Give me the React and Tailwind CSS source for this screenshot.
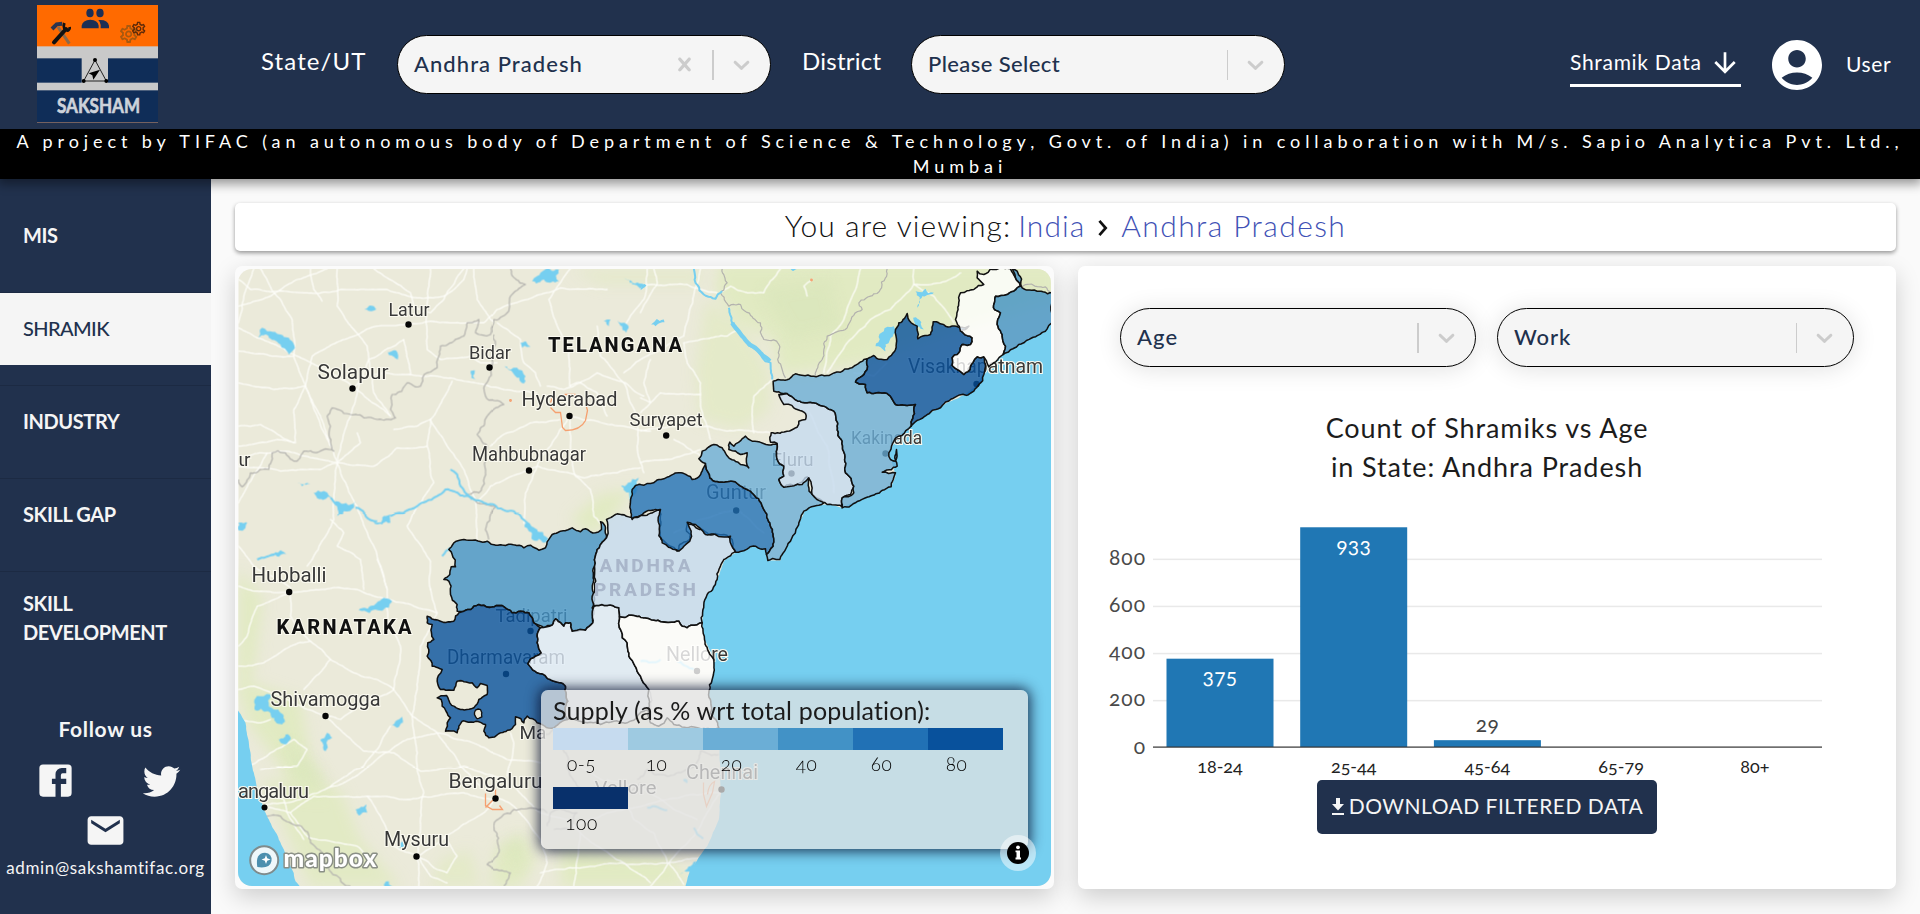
import React from "react";
import { MdAccountCircle, MdArrowDownward, MdEmail, MdPeople, MdOutlineSettings } from "react-icons/md";

/* ---------- map drawing helpers ---------- */

function noise(x, y) {
  const s = Math.sin(x * 12.9898 + y * 78.233) * 43758.5453;
  return (s - Math.floor(s)) * 2 - 1;
}

function split(a, b, amp, out) {
  const len = Math.hypot(b[0] - a[0], b[1] - a[1]);
  if (len < 11) {
    out.push(b);
    return;
  }
  const mx = (a[0] + b[0]) / 2;
  const my = (a[1] + b[1]) / 2;
  const d = Math.min(len, 60) * amp;
  const m = [mx + noise(mx, my) * d, my + noise(my, mx) * d];
  split(a, m, amp, out);
  split(m, b, amp, out);
}

function rough(text, amp = 0.12, closed = true) {
  const n = text.trim().split(/[\s,]+/).map(Number);
  const pts = [];
  for (let i = 0; i < n.length; i += 2) pts.push([n[i], n[i + 1]]);
  const out = [pts[0]];
  const last = closed ? pts.length : pts.length - 1;
  for (let i = 0; i < last; i++) split(pts[i], pts[(i + 1) % pts.length], amp, out);
  return "M" + out.map((p) => p[0].toFixed(1) + " " + p[1].toFixed(1)).join("L") + (closed ? "Z" : "");
}

/* Sections share one scale (3 units per pixel) and differ in origin. */
const NW = "translate(230 260) scale(.33333)";
const NE = "translate(640 260) scale(.33333)";
const SW = "translate(230 580) scale(.33333)";
const SE = "translate(640 580) scale(.33333)";
const MID = "translate(420 480) scale(.33333)";

const SEA =
  "2470 180 2440 215 2385 245 2320 285 2280 315 2260 335 2240 375 2205 405 2150 430 2100 460 2050 490 2000 530 1975 580 1995 650 1982 682 1900 715 1835 745 1790 735 1750 738 1725 750 1705 790 1680 845 1655 885 1650 903 1610 903 1605 870 1570 860 1510 883 1480 905 1460 960 1420 1020 1415 1090 1422 1140 1450 1200 1445 1260 1435 1300 1440 1360 1465 1405 1467 1490 1472 1600 1465 1680 1430 1760 1380 1830 1362 1890 2480 1890";
const WEST_SEA = "10 1340 24 1355 45 1390 60 1480 70 1540 85 1600 105 1660 130 1710 160 1770 180 1820 195 1865 215 1890 10 1890";

const MID_DISTRICTS = [
  ["#4292c6", "85 210 100 190 130 180 200 185 255 198 310 205 330 197 355 212 375 205 395 165 420 155 455 145 480 157 495 148 525 160 543 150 540 127 555 145 558 175 530 210 522 260 515 385 517 430 495 452 470 455 455 455 450 430 435 430 430 440 405 418 395 437 370 445 340 430 325 400 300 395 275 400 245 378 175 375 130 395 110 395 110 375 90 345 85 305 70 300 88 285 92 262 105 262 95 225"],
  ["#08519c", "20 410 60 425 100 425 115 400 130 395 175 375 245 378 275 400 300 395 325 400 340 430 360 445 350 470 350 490 362 520 345 530 322 553 350 580 400 605 435 620 440 720 400 745 350 730 320 710 310 730 285 712 285 735 240 760 205 775 190 755 195 735 160 728 125 725 115 740 110 760 75 755 80 730 90 715 65 680 62 660 50 655 78 648 88 670 120 690 160 685 175 660 200 645 200 618 180 612 170 625 155 610 110 605 100 632 60 630 50 605 65 570 35 560 20 530 22 490 40 480 35 435 20 430"],
  ["#deebf7", "360 445 395 437 405 418 430 440 435 430 450 430 455 455 495 452 517 430 520 380 560 378 595 385 597 412 600 450 620 490 625 530 660 590 685 630 690 690 620 730 580 725 540 735 440 720 435 620 400 605 350 580 322 553 345 530 362 520 350 490 350 470"],
  ["#c6dbef", "562 150 558 120 585 105 635 115 660 108 718 90 722 180 770 215 778 195 808 180 810 165 798 155 800 132 845 150 865 165 910 165 935 180 938 205 945 215 910 240 890 300 860 345 850 375 845 430 800 445 785 440 775 425 700 422 640 408 597 412 595 385 560 378 520 380 515 350 522 260 530 210 558 175"],
  ["#ffffff", "597 412 640 408 700 422 775 425 785 440 800 445 845 430 852 480 880 540 875 600 865 640 870 700 895 745 800 745 760 735 740 715 715 740 690 730 685 630 660 590 625 530 620 490 600 450"],
];

const NE_DISTRICTS = [
  ["#2171b5", "-25 780 -25 690 -15 678 30 672 70 658 115 640 155 660 185 635 195 612 208 655 250 668 290 672 330 695 365 740 388 790 398 830 398 860 378 885 375 868 345 860 285 878 270 830 195 825 165 795 140 788 152 815 148 845 115 875 65 850 60 750 0 768"],
  ["#6baed6", "175 598 185 575 220 555 245 565 265 595 300 615 325 625 320 580 300 585 265 570 268 548 280 560 315 530 335 545 410 552 410 600 430 620 430 650 415 660 430 683 470 675 500 652 515 705 550 730 520 740 490 755 475 790 450 845 425 885 418 900 382 903 378 885 398 860 398 830 388 790 365 740 330 695 290 672 250 668 208 655 195 612"],
  ["#c6dbef", "415 405 440 402 500 430 550 440 580 455 590 500 605 545 615 640 640 680 630 705 605 715 605 742 560 735 515 705 505 655 485 675 430 683 415 660 430 650 430 620 410 600 410 552 390 548 392 520 470 503 475 485 495 480 495 462 470 450 430 435"],
  ["#6baed6", "398 365 450 355 465 343 520 350 560 348 600 338 680 298 680 330 645 368 675 375 680 400 740 402 765 435 825 435 812 500 760 545 745 580 750 600 765 605 768 570 770 620 725 638 765 640 752 682 605 745 605 715 640 700 640 680 615 640 605 545 590 500 580 455 550 440 500 430 440 402 400 395"],
  ["#08519c", "680 298 700 288 740 300 765 270 765 210 775 190 800 162 812 190 830 200 832 238 870 225 878 187 915 200 970 205 985 200 960 215 995 235 990 255 965 255 955 280 935 295 935 318 970 345 990 320 1010 292 1030 292 1035 320 1030 345 1000 395 900 445 812 500 825 435 765 435 740 402 680 400 675 375 645 368 680 330"],
  ["#ffffff", "1010 35 1030 45 1050 28 1110 28 1125 55 1140 80 1120 95 1065 110 1062 150 1080 160 1070 195 1085 225 1095 260 1088 285 1045 322 1030 292 1010 292 990 320 970 345 935 318 935 295 955 280 965 255 990 255 995 235 960 215 945 180 960 100 1000 90 1030 75 1010 55"],
  ["#4292c6", "1115 28 1130 35 1145 85 1190 95 1240 98 1240 180 1215 215 1150 250 1088 285 1095 260 1085 225 1070 195 1080 160 1062 150 1065 110 1120 95 1140 80 1125 55"],
];

const ROADS = {
  [NW]: [
    "24 205 80 235 200 290 310 345 370 385", "24 60 60 90 160 95 230 100 330 90 470 90 560 115 640 110 700 60 710 28",
    "70 28 40 110 24 190", "90 28 150 120 185 180 190 290 225 380 320 610", "320 28 320 140 370 210 410 260 415 300 385 380 360 470 320 610",
    "24 370 130 390 225 380 245 290 420 205 530 195 600 185 760 190 800 150 870 125 990 85 1130 90", "190 290 130 290 24 275",
    "225 380 190 450 195 550 140 540 24 560", "225 380 270 470 300 560", "415 300 520 240 540 345", "540 345 470 340 400 350 370 385",
    "540 345 620 350 700 365 780 382 920 400", "600 480 665 365", "600 480 590 560 600 640 610 670 560 740 530 800 600 905 600 990",
    "600 480 650 560 700 630 735 720 740 840", "320 610 270 600 150 575 24 590", "320 610 330 640 380 740 430 860 470 990", "320 610 310 780 230 920",
    "320 610 270 630 150 635 24 620", "300 780 340 820 320 860 390 900 400 990", "320 610 430 620 500 565 590 560",
    "24 730 110 580", "24 860 70 920 180 985", "1020 28 955 120 985 210 1015 280 1018 380", "1018 470 1180 500 1260 515",
    "1018 470 960 560 920 620 885 700 880 790 920 840", "920 620 1060 655 1160 640 1230 625", "920 620 780 680 740 730",
    "1018 470 1020 560 1035 650 1080 690 1090 770 1120 800", "1018 380 1100 340 1185 370 1240 410", "1250 28 1240 120 1180 200",
    "1100 200 1110 290 1180 370 1220 470 1220 560 1240 640", "800 190 870 240 880 310 915 340 930 380", "950 380 1000 390 1050 370 1100 400 1130 470",
    "600 28 590 130 590 270 630 300 720 290 750 310 800 310", "240 28 250 90 275 125", "430 28 540 100 550 140 600 160 640 120 700 28",
    "380 520 390 550 320 610", "490 510 560 500 600 480", "370 385 460 450 480 470", "780 560 830 520 900 490 990 480",
    "24 140 120 110 200 60 290 28", "24 500 90 495 190 550", "730 28 740 120 790 190", "415 300 430 400 480 470",
  ],
  [NE]: [
    "40 28 50 75 0 160", "0 75 140 75 230 100", "240 100 270 80 320 100 370 100 380 80 420 28", "180 28 130 230 0 300 -50 340",
    "130 250 140 310 180 370 180 440 200 500", "130 250 260 230 290 210", "395 360 340 410 335 470 340 520", "0 515 90 500 200 500 260 515 330 515 390 520",
    "500 110 490 80 515 60", "660 28 640 100 610 180 570 230 550 340", "820 28 820 75 750 150 690 180 620 250 560 340", "820 75 880 110 940 190",
    "820 75 900 70 960 40", "0 415 30 430 60 400 180 405", "100 540 150 570 190 600", "0 610 80 600 180 570", "200 500 210 540",
    "30 300 10 370 30 430 0 460", "740 310 700 350 640 340", "500 450 560 560 580 700", "100 820 180 780 290 750 370 820",
  ],
  [SW]: [
    "180 38 180 110 240 185 300 240 370 280 440 300 490 330 545 410 620 460 690 560 750 620", "24 260 100 250 180 200 240 185",
    "24 20 80 35 180 38 290 28 380 30 430 50 520 70 620 100", "300 240 220 330", "600 28 620 100 570 200 560 330 545 410",
    "490 330 510 200 470 120 470 28 440 -60", "24 330 70 320 150 350 285 410 350 470 400 515 490 520 570 575 700 560 820 600",
    "285 410 330 420 400 370 490 330", "545 410 560 560 580 640 560 830 565 920", "620 460 530 480 450 530 390 580 310 620 210 660 100 680",
    "620 460 740 495 830 540 930 550", "840 460 850 490 830 590", "795 655 760 700 680 750 560 830", "795 655 850 680 930 780 950 850 920 920",
    "850 620 930 700 1010 720 1050 760 1100 800 1180 850 1260 910", "100 680 180 700 250 650 410 650 540 660 700 640 790 660",
    "410 650 450 710 490 800 560 830", "180 700 230 770 380 800 400 820", "560 830 620 870 650 880 680 830 640 770", "24 420 90 430 120 420",
    "50 560 120 520 190 480 230 510 200 560 90 570", "480 440 440 510 400 560 300 620",
    "24 200 50 170 80 80 180 38", "1050 760 1030 920", "100 620 160 660 170 700 220 780", "560 830 600 890 650 910",
  ],
  [SE]: [
    "-200 740 -100 700 80 660 200 640 240 640", "-300 880 -60 850 85 850 200 830", "85 850 130 915", "85 850 30 920", "240 640 180 740 130 800 85 850",
    "-100 600 0 620 100 690 170 720", "-180 560 -60 640 -20 720 40 760 80 850",
  ],
};

const LAKES = {
  [NW]: [
    "85 235 95 205 110 215 150 225 175 235 190 270 175 285 150 255 115 235", "402 150 418 138 437 150 422 155", "870 250 885 245 900 262 875 265",
    "822 320 860 325 885 350 880 372 855 350", "720 335 733 332 735 360 722 355", "472 278 490 272 502 300 490 292", "905 65 930 40 985 30 985 65 940 60",
    "315 725 375 725 370 745 340 755 320 770", "430 785 480 765 480 790 440 795", "1120 185 1140 180 1135 200", "1162 183 1190 195 1188 220 1175 200",
    "1172 680 1225 655 1220 690 1200 725", "24 790 50 790 45 805 24 812", "120 890 150 872 172 885 145 892", "200 668 240 672 215 680", "1180 55 1250 78 1230 88 1205 75",
    "880 785 920 810 955 840 940 850 895 815", "250 700 300 712 310 718 260 716",
  ],
  [NE]: [
    "825 95 855 88 880 100 845 110 830 145", "818 175 835 180 850 210 825 205", "705 260 730 215 760 200 735 255 735 275", "32 195 70 180 72 188 45 200",
    "0 75 18 78 0 92", "450 28 470 28 455 34",
  ],
  [SW]: [
    "385 92 430 78 460 55 485 65 475 85 435 90", "72 390 90 350 120 345 130 390 160 410 155 435 110 395", "145 480 165 465 180 480 165 495",
    "270 480 290 460 305 475 285 515", "485 438 515 412 517 430 500 445", "375 690 408 675 410 700 385 708", "460 915 475 905 485 920 462 922",
    "505 790 520 785 525 800 508 805",
  ],
  [SE]: ["118 885 150 860 168 845 150 880", "128 600 140 600 140 612"],
};

const RIVERS = {
  [NW]: ["300 715 320 735", "375 745 410 775 440 785", "480 770 560 740 620 710 645 690 690 708 730 720 790 735 850 755 885 785", "660 630 680 645 690 680 725 720", "885 785 940 845", "80 900 130 885", "635 890 660 865"],
  [NE]: ["265 145 275 190 310 235 350 270 390 310 395 360", "160 28 165 70 190 105 225 118 245 95"],
  [SE]: ["20 685 80 692", "160 745 188 778", "0 245 60 240", "110 245 160 270"],
};

const BORDERS = {
  [NW]: [
    "24 660 35 682 60 640 115 630 125 580 165 580 200 605 220 575 285 568 310 575 300 500 290 470 305 445 360 465 400 475 440 480 495 475 480 450 485 405 530 370 570 380 590 340 620 325 630 260 700 230 710 190 745 180 735 220 780 225 790 180 835 155 840 110 885 75 840 28",
    "790 225 785 300 760 385 765 410 820 435 770 470 740 525 770 560 765 640 745 700 710 705 740 730 795 740 770 790 775 840",
  ],
  [NE]: ["245 28 260 70 240 100 265 140 300 135 360 190 370 240 415 255 425 330 435 355", "740 28 735 55 690 110 655 130 665 150 620 205 560 230 545 300 525 348", "1145 80 1230 98"],
  [SW]: [
    "105 712 150 710 220 750 240 790 290 860 360 920", "790 740 850 690 900 685 950 700", "790 740 800 830 770 855 840 880 820 920",
    "930 470 1000 420 1100 400", "990 500 1010 560 1040 620 1100 660 1180 640 1230 610", "950 740 960 700 1040 700 1020 750 970 750",
  ],
  [SE]: ["-10 600 20 570 80 590 140 570 180 515 235 525"],
};

/* label, x, baseline y, width, font size, dot x, dot y */
const CITIES = [
  ["Latur", 388, 316.5, 41, 19, 408, 325], ["Solapur", 317, 379, 71, 20, 352, 389], ["Bidar", 468.5, 359, 42, 19, 489, 368],
  ["Hyderabad", 521, 406.5, 96, 21, 569, 416.5], ["Suryapet", 629, 426.5, 73, 19, 665.7, 436], ["Mahbubnagar", 471.5, 461.5, 114, 20, 528.5, 471],
  ["Hubballi", 251, 582, 75, 20, 288.7, 592.5], ["Shivamogga", 270, 706, 110, 20, 325, 716.5], ["Bengaluru", 448, 788.5, 94, 21, 495, 799],
  ["Mysuru", 383.5, 846, 65, 20, 416, 857], ["Tadipatri", 495, 622, 72, 19, 530, 631.5], ["Dharmavaram", 446.5, 664.5, 118, 20, 505.5, 674.5],
  ["Nellore", 665.5, 661.5, 62, 20, 696.5, 671.5], ["Chennai", 685.5, 779.5, 72, 20, 721, 790], ["Vellore", 594, 794.5, 62, 19, 0, 0],
  ["Guntur", 705.5, 499.5, 60, 21, 735.7, 511], ["Eluru", 771, 466.5, 42, 19, 791, 474], ["Kakinada", 850.5, 444.5, 71, 19, 885, 454],
  ["Visakhapatnam", 907.5, 373.5, 135, 20, 976, 384.5],
];

function Sections({ data, children }) {
  return Object.entries(data).map(([origin, items]) => (
    <g key={origin} transform={origin}>
      {items.map((item, i) => React.cloneElement(children(item), { key: i }))}
    </g>
  ));
}

function Districts({ origin, items }) {
  return (
    <g transform={origin} stroke="#111" strokeWidth="4.6" strokeLinejoin="round">
      {items.map(([fill, pts]) => (
        <path key={pts} d={rough(pts, 0.13)} fill={fill} fillOpacity=".8" />
      ))}
    </g>
  );
}

function MapDrawing() {
  return (
    <svg viewBox="238 269.5 812 617.5" className="block h-full w-full rounded-[14px]" fontFamily="Roboto, sans-serif">
      <defs>
        <filter id="soft" x="-30%" y="-30%" width="160%" height="160%">
          <feGaussianBlur stdDeviation="7" />
        </filter>
      </defs>
      <rect x="238" y="269" width="812" height="618" fill="#ebeada" />
      <g filter="url(#soft)" fill="#e1eac2">
        <path d="M720 262 H1060 V300 L960 330 L900 350 L860 365 L780 375 L772 340 L735 320 L715 290Z" />
        <path d="M705 300 L745 330 L768 370 L770 410 L740 430 L700 420 L695 370 L700 340Z" opacity=".7" />
        <path d="M570 270 H700 V285 H600Z" opacity=".6" />
        <path d="M570 520 L600 495 L632 490 L610 520 L590 535Z" />
        <path d="M238 570 L262 600 L255 660 L245 700 H238Z" />
        <path d="M240 680 L300 700 L310 760 L335 800 L300 800 L275 760 L245 720Z" />
        <path d="M262 780 L340 790 L360 840 L400 887 H310 L280 820Z" opacity=".9" />
        <path d="M495 850 L520 835 L535 860 L520 887 H490Z" />
        <path d="M560 850 L670 860 L690 887 H560Z" />
        <path d="M440 860 L470 850 L480 887 H430Z" opacity=".7" />
      </g>
      <g filter="url(#soft)" fill="#d6e4b8" opacity=".45">
        <path d="M285 740 L320 770 L325 790 L295 780Z" />
        <path d="M760 290 L830 280 L840 330 L790 340Z" />
        <path d="M500 845 L525 835 L520 870Z" />
      </g>
      <g fill="none" stroke="#fdfdf9" strokeWidth="3.8" strokeLinejoin="round" strokeLinecap="round">
        <Sections data={ROADS}>{(d) => <path d={rough(d, 0.06, false)} />}</Sections>
      </g>
      <g fill="none" stroke="#b3b2ae" strokeWidth="3.6" strokeLinejoin="round">
        <Sections data={BORDERS}>{(d) => <path d={rough(d, 0.16, false)} />}</Sections>
      </g>
      <g fill="none" stroke="#76cff0" strokeWidth="6" strokeLinejoin="round">
        <Sections data={RIVERS}>{(d) => <path d={rough(d, 0.12, false)} />}</Sections>
      </g>
      <g transform={NE} fill="none" stroke="#76cff0" strokeWidth="13">
        <path d={rough("275 190 310 235 350 270 388 305", 0.05, false)} />
      </g>
      <g fill="#76cff0">
        <Sections data={LAKES}>{(d) => <path d={rough(d, 0.25)} />}</Sections>
      </g>
      <g transform={NW} fill="#76cff0">
        <path d={rough(SEA, 0.03)} />
        <path d={rough(WEST_SEA, 0.05)} />
      </g>
      <g fill="none" stroke="#f5a070" strokeWidth="1.3">
        <path d="M550 408 L555 413 L560 413 L562 428 L565 431 Q580 431 585 421 L587 411 L585 404" />
        <path d="M550 403 L552 398 M564 395 L575 395" />
        <path d="M485 794 L485 806 L492 810 L502 810 L499 806 M485 808 L495 798 L495 790" />
        <path d="M703 783 L703 795 L706 807 L712 793 L714 782 Q708 785 707 795" />
        <circle cx="510" cy="401" r=".8" />
        <circle cx="811" cy="280.500" r=".8" />
      </g>
      <g fontWeight="800" fill="#111" stroke="#fbfaf0" strokeWidth="2" paintOrder="stroke">
        <text x="547.500" y="352" textLength="134" fontSize="20">TELANGANA</text>
        <text x="276" y="634" textLength="135" fontSize="20">KARNATAKA</text>
      </g>
      <g fill="#383838" stroke="#fbfaf0" strokeWidth="2.2" paintOrder="stroke">
        <text x="238" y="466" fontSize="19" textLength="12">ur</text>
        <text x="237.500" y="798.500" fontSize="20" textLength="71">angaluru</text>
        <text x="519" y="739" fontSize="19">Ma</text>
        {CITIES.map(([name, x, y, w, size]) => (
          <text key={name} x={x} y={y} fontSize={size} textLength={w} lengthAdjust="spacingAndGlyphs">
            {name}
          </text>
        ))}
      </g>
      <g fill="#050505">
        <circle cx="264" cy="808" r="3" />
        {CITIES.map(([name, , , , , x, y]) => (
          <circle key={name} cx={x} cy={y} r="3.200" />
        ))}
      </g>
      <Districts origin={MID} items={MID_DISTRICTS} />
      <Districts origin={NE} items={NE_DISTRICTS} />
      <path transform={MID} d={rough("165 692 180 690 184 712 170 718 162 705", 0.2)} fill="#ebeada" stroke="#111" strokeWidth="4" />
      <g fontWeight="800" fontSize="19" fill="#a9b6ca">
        <text x="599" y="572.500" textLength="91">ANDHRA</text>
        <text x="593.500" y="596.500" textLength="102">PRADESH</text>
      </g>
      <circle cx="263.700" cy="860.700" r="14" fill="#eef7fa" stroke="#7f8b8c" strokeWidth="2" />
      <path d="M256.800 867.600 Q254.500 853.800 264.500 853.300 Q271.800 854 271 861.500 Q269.500 869.500 256.800 867.600Z" fill="#4c8fae" />
      <path d="M265.500 855.500 L266.700 858.800 L270 860 L266.700 861.200 L265.500 864.500 L264.300 861.200 L261 860 L264.300 858.800Z" fill="#fff" />
      <text x="283" y="867" fontFamily="Lato, sans-serif" fontWeight="900" fontSize="24.500" textLength="93" fill="#fff" stroke="#8a8f86" strokeWidth="3" paintOrder="stroke" strokeLinejoin="round">
        mapbox
      </text>
    </svg>
  );
}

/* ---------- page pieces ---------- */

function Logo() {
  return (
    <svg viewBox="21 14 363 354" preserveAspectRatio="none" className="h-[118px] w-[121px]">
      <rect x="21" y="14" width="363" height="354" fill="#c9c9c9" />
      <rect x="21" y="14" width="363" height="124" fill="#ff6a00" />
      <rect x="21" y="174" width="134" height="73" fill="#0f2d58" />
      <rect x="234" y="174" width="150" height="73" fill="#0f2d58" />
      <rect x="21" y="270" width="363" height="96" fill="#0f2d58" />
      <rect x="21" y="366" width="363" height="2" fill="#6b4740" />
      <g fill="#1c2f55">
        <ellipse cx="180" cy="38" rx="11" ry="13" />
        <ellipse cx="210" cy="38" rx="11" ry="13" />
        <path d="M155 84 V76 Q158 59 181 58 Q204 59 206 76 V84Z" />
        <path d="M212 84 V74 Q211 65 205 59 Q234 57 237 76 V84Z" />
      </g>
      <g fill="none">
        <path d="M84 80 L118 130" stroke="#8a6a4c" strokeWidth="9" />
        <path d="M66 86 L80 72 L97 70" stroke="#2b3550" strokeWidth="12" />
        <path d="M72 126 L108 86" stroke="#111" strokeWidth="12" strokeLinecap="round" />
        <path d="M103 68 Q97 88 113 91 Q120 88 119 80" stroke="#111" strokeWidth="8" />
      </g>
      <MdOutlineSettings size={64} x="264" y="69" color="#a8590f" />
      <MdOutlineSettings size={50} x="301" y="60" color="#5e2a08" />
      <path d="M195 179 L161 242 L229 242Z" fill="none" stroke="#222" strokeWidth="3" />
      <circle cx="195" cy="179" r="6" />
      <circle cx="161" cy="242" r="6" />
      <circle cx="229" cy="242" r="6" />
      <path d="M210 208 L176 219 L187 225 L190 238Z" />
      <text x="81" y="339" textLength="249" lengthAdjust="spacingAndGlyphs" fontSize="63" fontWeight="700" fill="#cdd2da" stroke="#cdd2da" strokeWidth="2" fontFamily="Lato, sans-serif">
        SAKSHAM
      </text>
    </svg>
  );
}

function Chevron() {
  return (
    <svg viewBox="0 0 20 20" className="h-[27px] w-[27px] fill-[#ccc]">
      <path d="M4.516 7.548c0.436-0.446 1.043-0.481 1.576 0l3.908 3.747 3.908-3.747c0.533-0.481 1.141-0.446 1.574 0 0.436 0.445 0.408 1.197 0 1.615-0.406 0.418-4.695 4.502-4.695 4.502-0.217 0.223-0.502 0.335-0.787 0.335s-0.57-0.112-0.789-0.335c0 0-4.287-4.084-4.695-4.502s-0.436-1.170 0-1.615z" />
    </svg>
  );
}

function Cross() {
  return (
    <svg viewBox="0 0 20 20" className="mr-3.5 h-[27px] w-[27px] fill-[#ccc]">
      <path d="M14.348 14.849c-0.469 0.469-1.229 0.469-1.697 0l-2.651-3.030-2.651 3.029c-0.469 0.469-1.229 0.469-1.697 0-0.469-0.469-0.469-1.229 0-1.697l2.758-3.150-2.759-3.152c-0.469-0.469-0.469-1.228 0-1.697s1.228-0.469 1.697 0l2.652 3.031 2.651-3.031c0.469-0.469 1.228-0.469 1.697 0s0.469 1.229 0 1.697l-2.758 3.152 2.758 3.150c0.469 0.469 0.469 1.229 0 1.698z" />
    </svg>
  );
}

function Select({ value, clearable, thick, className }) {
  return (
    <div className={"flex h-[59px] items-center rounded-[30px] border border-black bg-[#f5f5f5] pr-[15px] pl-4 text-[22px] font-medium text-[#21314d] " + className}>
      <span className="flex-1 pb-0.5 whitespace-nowrap">{value}</span>
      {clearable && <Cross />}
      <span className={"mr-[14px] h-[30px] bg-[#ccc] " + (thick ? "w-0.5" : "w-px")} />
      <Chevron />
    </div>
  );
}

function NavItem({ active, last, children }) {
  return (
    <li className={last ? "" : "border-b border-[#1c2a43] pb-5"}>
      <a
        className={
          "flex h-[72px] items-center pb-px pl-[23px] text-[20px] leading-[29px] " +
          (active ? "bg-[#f5f5f5] font-medium tracking-[-0.6px] text-[#21314d]" : "font-bold tracking-[-0.4px] text-[#f5f5f5]")
        }
      >
        {children}
      </a>
    </li>
  );
}

function Sidebar() {
  return (
    <nav className="flex w-[211px] flex-col bg-[#21314d] text-[#f5f5f5]">
      <ul className="pt-[21px]">
        <NavItem>MIS</NavItem>
        <NavItem active>SHRAMIK</NavItem>
        <NavItem>INDUSTRY</NavItem>
        <NavItem>SKILL GAP</NavItem>
        <NavItem last>
          <span className="mt-[21px]">
            SKILL
            <br />
            DEVELOPMENT
          </span>
        </NavItem>
      </ul>
      <p className="mt-[71px] text-center text-[21px] leading-7 font-bold tracking-[0.7px]">Follow us</p>
      <div className="mt-[16px] grid grid-cols-2 justify-items-center">
        <svg viewBox="0 0 24 24" className="mr-[-6px] h-[43px] w-[43px] fill-[#f5f5f5]">
          <path d="M5 3h14a2 2 0 0 1 2 2v14a2 2 0 0 1-2 2H5a2 2 0 0 1-2-2V5a2 2 0 0 1 2-2m13 2h-2.500A3.500 3.500 0 0 0 12 8.500V11h-2v3h2v7h3v-7h3v-3h-3V9a1 1 0 0 1 1-1h2V5z" />
        </svg>
        <svg viewBox="0 0 24 24" className="ml-[6px] h-[43px] w-[43px] fill-[#f5f5f5]">
          <path d="M22.460 6c-.77.350-1.600.580-2.460.690.880-.530 1.560-1.370 1.880-2.380-.830.500-1.750.850-2.720 1.050C18.370 4.500 17.260 4 16 4c-2.350 0-4.270 1.920-4.270 4.290 0 .340.040.670.110.980C8.280 9.090 5.110 7.380 3 4.790c-.37.630-.58 1.370-.58 2.150 0 1.490.750 2.810 1.910 3.560-.71 0-1.370-.2-1.950-.5v.030c0 2.080 1.480 3.820 3.440 4.210a4.220 4.220 0 0 1-1.930.070 4.280 4.280 0 0 0 4 2.980 8.521 8.521 0 0 1-5.330 1.840c-.34 0-.68-.02-1.020-.06C3.440 20.290 5.700 21 8.120 21 16 21 20.330 14.460 20.330 8.790c0-.19 0-.37-.01-.56.840-.6 1.560-1.360 2.140-2.230z" />
        </svg>
      </div>
      <MdEmail className="mx-auto mt-[7px] h-[43px] w-[43px]" />
      <p className="mt-[4px] text-center text-[17px] leading-6 tracking-[0.64px] whitespace-nowrap">admin@sakshamtifac.org</p>
    </nav>
  );
}

const RAMP = [
  ["bg-[#c6dbef]", "0-5"],
  ["bg-[#9ecae1]", "10"],
  ["bg-[#6baed6]", "20"],
  ["bg-[#4292c6]", "40"],
  ["bg-[#2171b5]", "60"],
  ["bg-[#08519c]", "80"],
  ["bg-[#08306b]", "100"],
];

function Legend() {
  return (
    <div className="absolute top-[424px] left-[306px] h-[159px] w-[487px] rounded-[7px] bg-[rgba(225,225,225,0.75)] pt-[3px] pl-3 shadow-[0_0_13px_2px_rgba(10,20,50,0.85)]">
      <h3 className="text-[25px] leading-[35px] tracking-[0.15px] text-[#1b1b1b]">Supply (as % wrt total population):</h3>
      <div className="flex w-[450px] flex-wrap">
        {RAMP.map(([color, label]) => (
          <div key={label} className="h-[59px] w-[75px]">
            <div className={"h-[22px] " + color} />
            <div className="mr-[18px] text-center text-[19px] leading-[28px] font-light tracking-[0.5px] text-black oldstyle-nums">{label}</div>
          </div>
        ))}
      </div>
    </div>
  );
}

const BARS = [
  ["18-24", 375],
  ["25-44", 933],
  ["45-64", 29],
  ["65-79", 0],
  ["80+", 0],
];

function Chart() {
  return (
    <svg viewBox="1078 500 818 281" className="block h-[281px] w-[818px] oldstyle-nums" fontFamily="Lato, sans-serif">
      {[0, 200, 400, 600, 800].map((v) => (
        <g key={v}>
          {v > 0 && <rect x="1153" y={748 - v * 0.2355} width="669" height="1.500" fill="#e9e9e9" />}
          <text x="1146" y={754.5 - v * 0.2355} textAnchor="end" fontSize="21" letterSpacing="1" fill="#4a4a4a">
            {v}
          </text>
        </g>
      ))}
      {BARS.map(([label, v], i) => {
        const x = 1166.5 + i * 133.7;
        const top = 748 - v * 0.2355;
        return (
          <g key={label} textAnchor="middle">
            <rect x={x} y={top} width="107" height={748 - top} fill="#2077b4" />
            {v > 0 && (
              <text x={x + 53.5} y={v > 100 ? top + 25.5 : top - 8.5} fontSize="21" letterSpacing=".3" fill={v > 100 ? "#fff" : "#444"}>
                {v}
              </text>
            )}
            <text x={x + 53.5} y="773.500" fontSize="18" fill="#222">
              {label}
            </text>
          </g>
        );
      })}
      <rect x="1153" y="747.500" width="669" height="1.200" fill="#333" />
    </svg>
  );
}

export default function App() {
  return (
    <div className="flex h-[914px] w-[1920px] flex-col overflow-hidden bg-[#fafafa] font-['Lato',sans-serif]">
      <header className="z-10 shadow-[0_3px_10px_2px_rgba(0,0,0,0.4)]">
        <div className="flex h-[130px] items-start bg-[#21314d] pl-[37px] text-white">
          <div className="w-[224px] pt-[5px]">
            <Logo />
          </div>
          <span className="w-[136px] pt-[43px] text-[24px] leading-9 tracking-[1.1px]">State/UT</span>
          <Select className="mt-[35px] w-[374px] tracking-[1.05px]" value="Andhra Pradesh" clearable thick />
          <span className="ml-[31px] w-[109px] pt-[43px] text-[24px] leading-9 tracking-[0.25px]">District</span>
          <Select className="mt-[35px] w-[374px] tracking-[0.4px]" value="Please Select" />
          <div className="mt-[45px] ml-[285px] flex h-[42px] w-[171px] justify-between border-b-3 border-white pt-px text-[21px] leading-8 tracking-[0.7px] whitespace-nowrap">
            Shramik Data
            <MdArrowDownward className="mt-px -ml-2 h-8 w-8" />
          </div>
          <MdAccountCircle className="mt-[35px] ml-[26px] h-[60px] w-[60px]" />
          <span className="mt-[46px] ml-[19px] text-[21px] leading-9 tracking-[0.6px]">User</span>
        </div>
        <p className="h-[50px] bg-black pb-1 text-center text-[18px] leading-[25px] tracking-[4.92px] whitespace-nowrap text-white">
          <span className="block h-[49px] -mt-px">
            A project by TIFAC (an autonomous body of Department of Science &amp; Technology, Govt. of India) in collaboration with M/s. Sapio Analytica Pvt. Ltd.,
            <br />
            Mumbai
          </span>
        </p>
      </header>
      <div className="flex min-h-0 flex-1">
        <Sidebar />
        <main className="flex-1 py-6 pr-6 pl-6">
          <div className="flex h-[48px] items-center justify-center rounded-[5px] bg-white pb-1 text-[30px] font-light tracking-[1.07px] text-[#111] shadow-[0_2px_4px_rgba(0,0,0,0.4)]">
            You are viewing:<span className="ml-[7px] text-[#3f51b5]">India</span>
            <svg viewBox="0 0 12 20" className="mr-[12px] ml-[12px] mt-1.5 h-[18px] w-3 fill-none stroke-[#111] stroke-3">
              <path d="M2 2 L9 10 L2 18" />
            </svg>
            <span className="tracking-[1.4px] text-[#3f51b5]">Andhra Pradesh</span>
          </div>
          <div className="mt-[15px] flex gap-6">
            <section className="relative h-[623px] w-[819px] rounded-[7px] bg-[#fbfbfb] px-[3px] pt-[2.5px] pb-[3px] shadow-[0_8px_25px_rgba(0,0,0,0.18)]">
              <MapDrawing />
              <Legend />
              <div className="absolute right-[18px] bottom-[18px] flex size-9 items-center justify-center rounded-full bg-white/50">
                <svg viewBox="0 0 22 22" className="size-[22px]">
                  <circle cx="11" cy="11" r="11" />
                  <circle cx="11" cy="5.300" r="1.900" fill="#fff" />
                  <path d="M8.500 8.500 H13 V15.500 H14 V17.500 H8.500 V15.500 H9.500 V10.300 H8.500Z" fill="#fff" />
                </svg>
              </div>
            </section>
            <section className="flex h-[623px] w-[818px] flex-col items-center rounded-[7px] bg-white shadow-[0_8px_25px_rgba(0,0,0,0.18)]">
              <div className="mt-[42px] flex gap-[21px]">
                <Select className="w-[356px] tracking-[1.1px] shadow-[0_2px_24px_rgba(0,0,0,0.12)]" value="Age" thick />
                <Select className="w-[357px] tracking-[0.9px] shadow-[0_2px_24px_rgba(0,0,0,0.12)]" value="Work" />
              </div>
              <h2 className="mt-[41px] h-[91px] text-center text-[27px] leading-[39px] tracking-[0.9px] text-[#1c1c1c]">
                Count of Shramiks vs Age
                <br />
                in State: Andhra Pradesh
              </h2>
              <Chart />
              <button className="flex h-[54px] w-[340px] shrink-0 items-center justify-center rounded-[5px] bg-[#21314d] pb-0.5 text-[21px] tracking-[0.5px] whitespace-nowrap text-[#f5f5f5]">
                <svg viewBox="0 0 14 17" className="mr-1 h-[17px] w-[14px] fill-current">
                  <path d="M5 0h4v6h4l-6 6.500L1 6h4zM1 15h12v2H1z" />
                </svg>
                DOWNLOAD FILTERED DATA
              </button>
            </section>
          </div>
        </main>
      </div>
    </div>
  );
}
